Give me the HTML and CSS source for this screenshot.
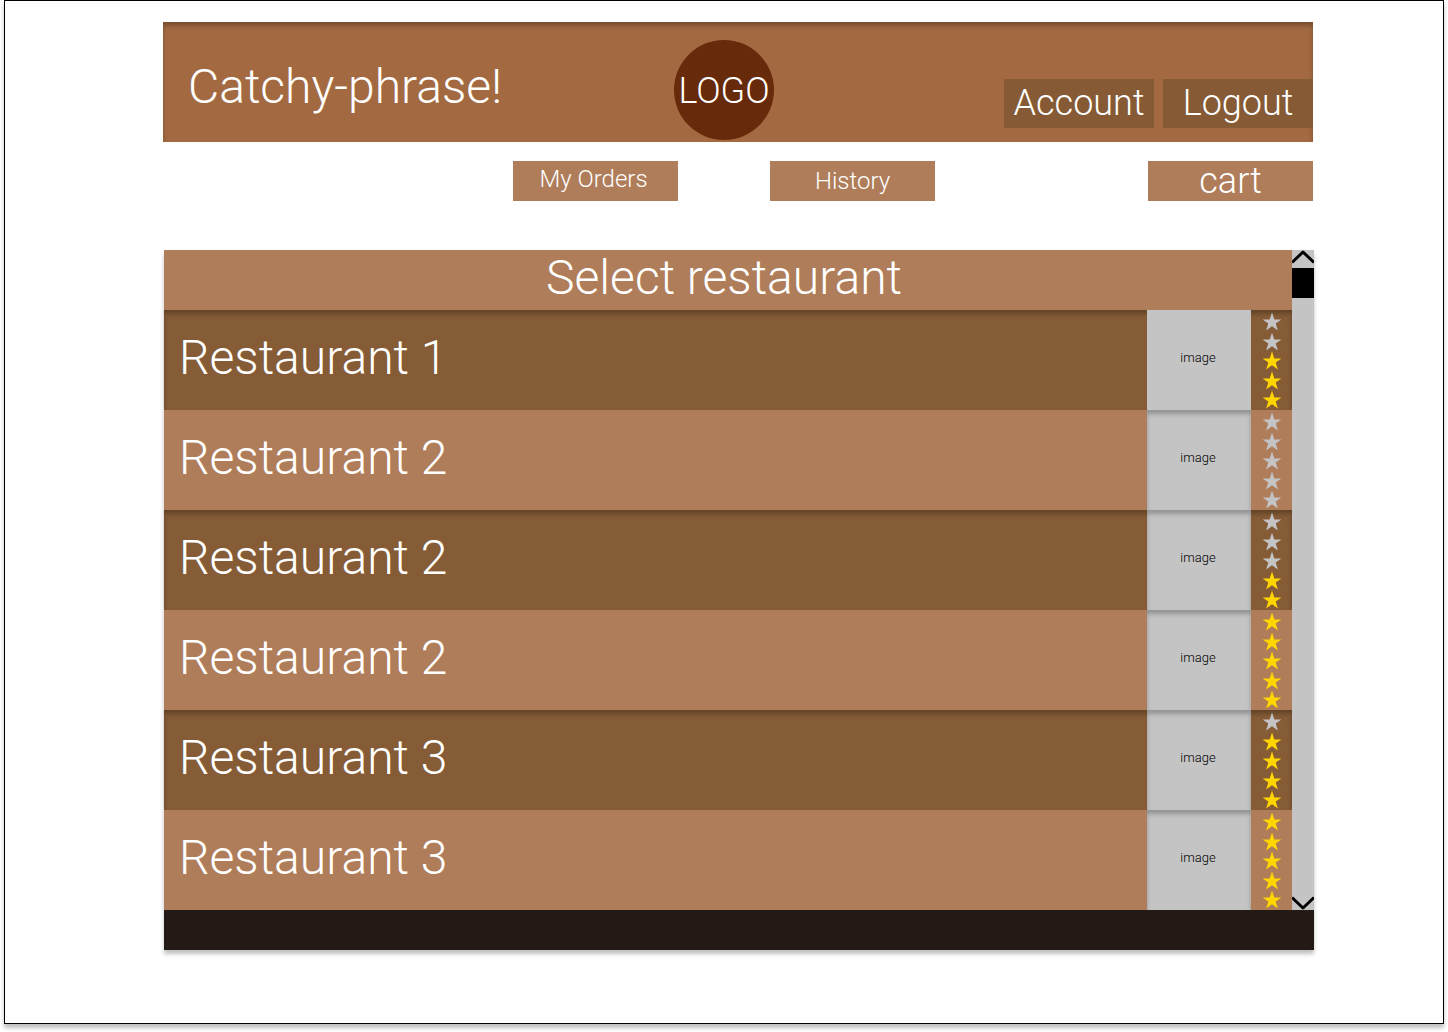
FILE: index.html
```html
<!DOCTYPE html>
<html lang="en">
<head>
<meta charset="utf-8">
<meta name="viewport" content="width=device-width, initial-scale=1">
<title>Select restaurant</title>
<link rel="stylesheet" href="styles.css">
</head>
<body>
<svg class="defs" aria-hidden="true">
  <symbol id="star" viewBox="0 0 20 19"><path d="M10 0.5 12.3 7.4H19.4L13.7 11.6 15.9 18.4 10 14.2 4.1 18.4 6.3 11.6 0.6 7.4H7.7Z"/></symbol>
</svg>
<div class="frame">
  <header class="banner">
    <p class="phrase">Catchy-phrase!</p>
    <div class="logo">LOGO</div>
    <div class="account">
      <button class="account-button" type="button">Account</button>
      <button class="account-button" type="button">Logout</button>
    </div>
  </header>
  <nav class="menu">
    <button class="menu-button raised" type="button">My Orders</button>
    <button class="menu-button" type="button">History</button>
    <button class="menu-button cart" type="button">cart</button>
  </nav>
  <main class="panel">
    <div class="panel-body">
      <section class="content">
        <h1 class="title">Select restaurant</h1>
        <ul class="list">
          <li class="row"><span class="name">Restaurant 1</span><span class="image">image</span><span class="stars"><svg class="star"><use href="#star"/></svg><svg class="star"><use href="#star"/></svg><svg class="star on"><use href="#star"/></svg><svg class="star on"><use href="#star"/></svg><svg class="star on"><use href="#star"/></svg></span></li>
          <li class="row"><span class="name">Restaurant 2</span><span class="image">image</span><span class="stars"><svg class="star"><use href="#star"/></svg><svg class="star"><use href="#star"/></svg><svg class="star"><use href="#star"/></svg><svg class="star"><use href="#star"/></svg><svg class="star"><use href="#star"/></svg></span></li>
          <li class="row"><span class="name">Restaurant 2</span><span class="image">image</span><span class="stars"><svg class="star"><use href="#star"/></svg><svg class="star"><use href="#star"/></svg><svg class="star"><use href="#star"/></svg><svg class="star on"><use href="#star"/></svg><svg class="star on"><use href="#star"/></svg></span></li>
          <li class="row"><span class="name">Restaurant 2</span><span class="image">image</span><span class="stars"><svg class="star on"><use href="#star"/></svg><svg class="star on"><use href="#star"/></svg><svg class="star on"><use href="#star"/></svg><svg class="star on"><use href="#star"/></svg><svg class="star on"><use href="#star"/></svg></span></li>
          <li class="row"><span class="name">Restaurant 3</span><span class="image">image</span><span class="stars"><svg class="star"><use href="#star"/></svg><svg class="star on"><use href="#star"/></svg><svg class="star on"><use href="#star"/></svg><svg class="star on"><use href="#star"/></svg><svg class="star on"><use href="#star"/></svg></span></li>
          <li class="row"><span class="name">Restaurant 3</span><span class="image">image</span><span class="stars"><svg class="star on"><use href="#star"/></svg><svg class="star on"><use href="#star"/></svg><svg class="star on"><use href="#star"/></svg><svg class="star on"><use href="#star"/></svg><svg class="star on"><use href="#star"/></svg></span></li>
        </ul>
      </section>
      <div class="scrollbar">
        <button class="scroll-button" type="button" aria-label="Scroll up"><svg class="chevron" viewBox="0 0 22 18"><path d="M0 12.5 11 2 22 12.5"/></svg></button>
        <div class="thumb"></div>
        <button class="scroll-button down" type="button" aria-label="Scroll down"><svg class="chevron" viewBox="0 0 22 18"><path d="M0 5.5 11 16 22 5.5"/></svg></button>
      </div>
    </div>
    <div class="panel-foot"></div>
  </main>
</div>
</body>
</html>
```
FILE: styles.css
```css
*,
*::before,
*::after {
  box-sizing: border-box;
}

body {
  margin: 0;
  padding: 0 4px 8px;
  background: #fff;
  color: #fff;
  font-family: Roboto, "Liberation Sans", sans-serif;
  font-weight: 300;
}

button {
  margin: 0;
  padding: 0;
  border: 0;
  color: inherit;
  font: inherit;
  cursor: pointer;
}

.defs {
  display: none;
}

.frame {
  min-height: calc(100vh - 8px);
  padding: 21px 130px 72px 158px;
  border: 1px solid #000;
  background: #fff;
  box-shadow: 0 4px 4px rgba(0, 0, 0, 0.25);
}

.banner {
  display: grid;
  grid-template-columns: 511fr 100px 539fr;
  min-height: 120px;
  background: #a36a41;
  box-shadow: inset 0 4px 4px rgba(0, 0, 0, 0.25);
}

.phrase {
  margin: 0;
  padding: 37px 0 0 25px;
  font-size: 48px;
  line-height: 56px;
}

.logo {
  width: 100px;
  height: 100px;
  margin-top: 18px;
  border-radius: 50%;
  background: #672a0a;
  font-size: 36px;
  line-height: 102px;
  text-align: center;
}

.account {
  display: flex;
  justify-content: flex-end;
  align-items: flex-end;
  gap: 9px;
  padding-bottom: 14px;
}

.account-button {
  width: 150px;
  height: 49px;
  padding-bottom: 2px;
  background: #855a34;
  font-size: 36px;
  line-height: 46px;
}

.menu {
  display: flex;
  gap: 92px;
  margin: 19px 0 49px;
  padding-left: 350px;
}

.menu-button {
  width: 165px;
  height: 40px;
  background: #af7d5a;
  font-size: 24px;
  line-height: 40px;
}

.raised {
  padding: 0 4px 4px 0;
  line-height: 36px;
}

.cart {
  margin-left: auto;
  font-size: 36px;
}

.panel {
  margin: 0 -1px 0 1px;
  box-shadow: 0 4px 4px rgba(0, 0, 0, 0.25);
}

.panel-body {
  display: flex;
}

.content {
  flex: 1;
  min-width: 0;
}

.title {
  margin: 0;
  padding: 0 8px 4px 0;
  background: #af7d5a;
  font-size: 48px;
  font-weight: 300;
  line-height: 56px;
  text-align: center;
}

.list {
  margin: 0;
  padding: 0;
  list-style: none;
}

.row {
  display: grid;
  grid-template-columns: minmax(0, 1fr) 104px 41px;
  min-height: 100px;
  background: #af7d5a;
}

.row:nth-child(odd) {
  background: #855c36;
  box-shadow: inset 0 4px 4px rgba(0, 0, 0, 0.25);
}

.name {
  padding-left: 15px;
  font-size: 48px;
  line-height: 96px;
}

.image {
  padding-right: 2px;
  background: #c4c4c4;
  color: #000;
  font-size: 13px;
  line-height: 96px;
  text-align: center;
}

.row + .row .image {
  box-shadow: inset 0 4px 4px rgba(0, 0, 0, 0.25);
}

.stars {
  display: flex;
  flex-direction: column;
  align-items: center;
  justify-content: space-between;
  padding: 2px 0 1px;
}

.star {
  width: 20px;
  height: 19px;
  fill: #c4c4c4;
}

.star.on {
  fill: #ffd600;
}

.scrollbar {
  display: flex;
  flex-direction: column;
  width: 22px;
  background: #c4c4c4;
}

.scroll-button {
  width: 22px;
  height: 18px;
  background: none;
}

.down {
  margin-top: auto;
}

.chevron {
  display: block;
  width: 22px;
  height: 18px;
  fill: none;
  stroke: #000;
  stroke-width: 3;
  stroke-linejoin: round;
}

.thumb {
  height: 30px;
  background: #000;
}

.panel-foot {
  height: 40px;
  background: #241a15;
}
```
